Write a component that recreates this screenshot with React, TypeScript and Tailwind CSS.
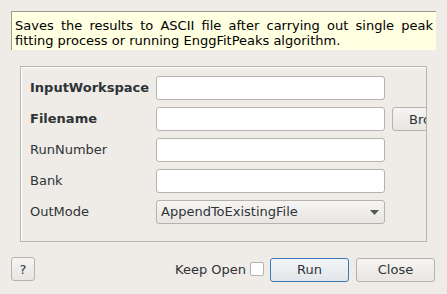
import type { ReactNode } from 'react'

const font = { fontFamily: '"DejaVu Sans", Verdana, sans-serif' }

function Field({ label, bold, children }: { label: string; bold?: boolean; children: ReactNode }) {
  return (
    <div className="flex items-center h-6">
      <span className={`w-[126px] shrink-0 text-[13px] text-[#2e3436] ${bold ? 'font-bold' : ''}`}>{label}</span>
      {children}
    </div>
  )
}

function TextBox() {
  return <div className="w-[229px] h-6 shrink-0 bg-white border border-[#b6b2ad] rounded-[3px]" />
}

function Button({ children, width, primary }: { children: ReactNode; width: string; primary?: boolean }) {
  return (
    <button
      className={`${width} h-6 shrink-0 rounded-[3px] text-[13px] text-[#2e3436] border ${
        primary
          ? 'border-[#3b79b8] bg-gradient-to-b from-[#f3f5f7] to-[#e2e6ea]'
          : 'border-[#b6b2ad] bg-gradient-to-b from-[#f6f5f4] to-[#e8e5e2]'
      }`}
    >
      {children}
    </button>
  )
}

export default function App() {
  return (
    <div className="w-[447px] h-[294px] bg-[#efebe7] overflow-hidden relative" style={font}>
      <div className="pt-[11px] pl-[11px]">
        <div className="w-[425px] h-[39px] bg-[#ffffe1] border-l border-t border-[#9f9c98] pl-[3px] pr-[3px] pt-[6px] text-[13px] leading-[15px] text-[#000] text-justify [text-align-last:left]">
          Saves the results to ASCII file after carrying out single peak fitting process or running EnggFitPeaks algorithm.
        </div>
      </div>

      <div className="ml-[20px] mt-[16px] w-[407px] h-[176px] border border-[#b8b4af] shadow-[inset_1px_1px_0_#fff] overflow-hidden pl-[9px] pt-[9px]">
        <div className="flex flex-col gap-[7px]">
          <Field label="InputWorkspace" bold>
            <TextBox />
          </Field>
          <Field label="Filename" bold>
            <TextBox />
            <div className="ml-[7px]">
              <Button width="w-[80px]">
                <span className="block text-left pl-[16px]">Browse</span>
              </Button>
            </div>
          </Field>
          <Field label="RunNumber">
            <TextBox />
          </Field>
          <Field label="Bank">
            <TextBox />
          </Field>
          <Field label="OutMode">
            <div className="w-[229px] h-6 shrink-0 rounded-[3px] border border-[#b6b2ad] bg-gradient-to-b from-[#f6f5f4] to-[#e8e5e2] flex items-center justify-between pl-[4px] pr-[5px] text-[13px] text-[#2e3436]">
              <span>AppendToExistingFile</span>
              <svg width="9" height="5" viewBox="0 0 9 5">
                <path d="M0 0 H9 L4.5 5 Z" fill="#555753" />
              </svg>
            </div>
          </Field>
        </div>
      </div>

      <div className="flex items-center mt-[15px] pl-[11px] pr-[12px]">
        <Button width="w-6">?</Button>
        <div className="flex-1" />
        <span className="text-[13px] text-[#2e3436]">Keep Open</span>
        <div className="w-[14px] h-[14px] ml-[4px] bg-white border border-[#b6b2ad] rounded-[2px]" />
        <div className="ml-[6px]">
          <Button width="w-[79px]" primary>Run</Button>
        </div>
        <div className="ml-[7px]">
          <Button width="w-[79px]">Close</Button>
        </div>
      </div>
    </div>
  )
}
